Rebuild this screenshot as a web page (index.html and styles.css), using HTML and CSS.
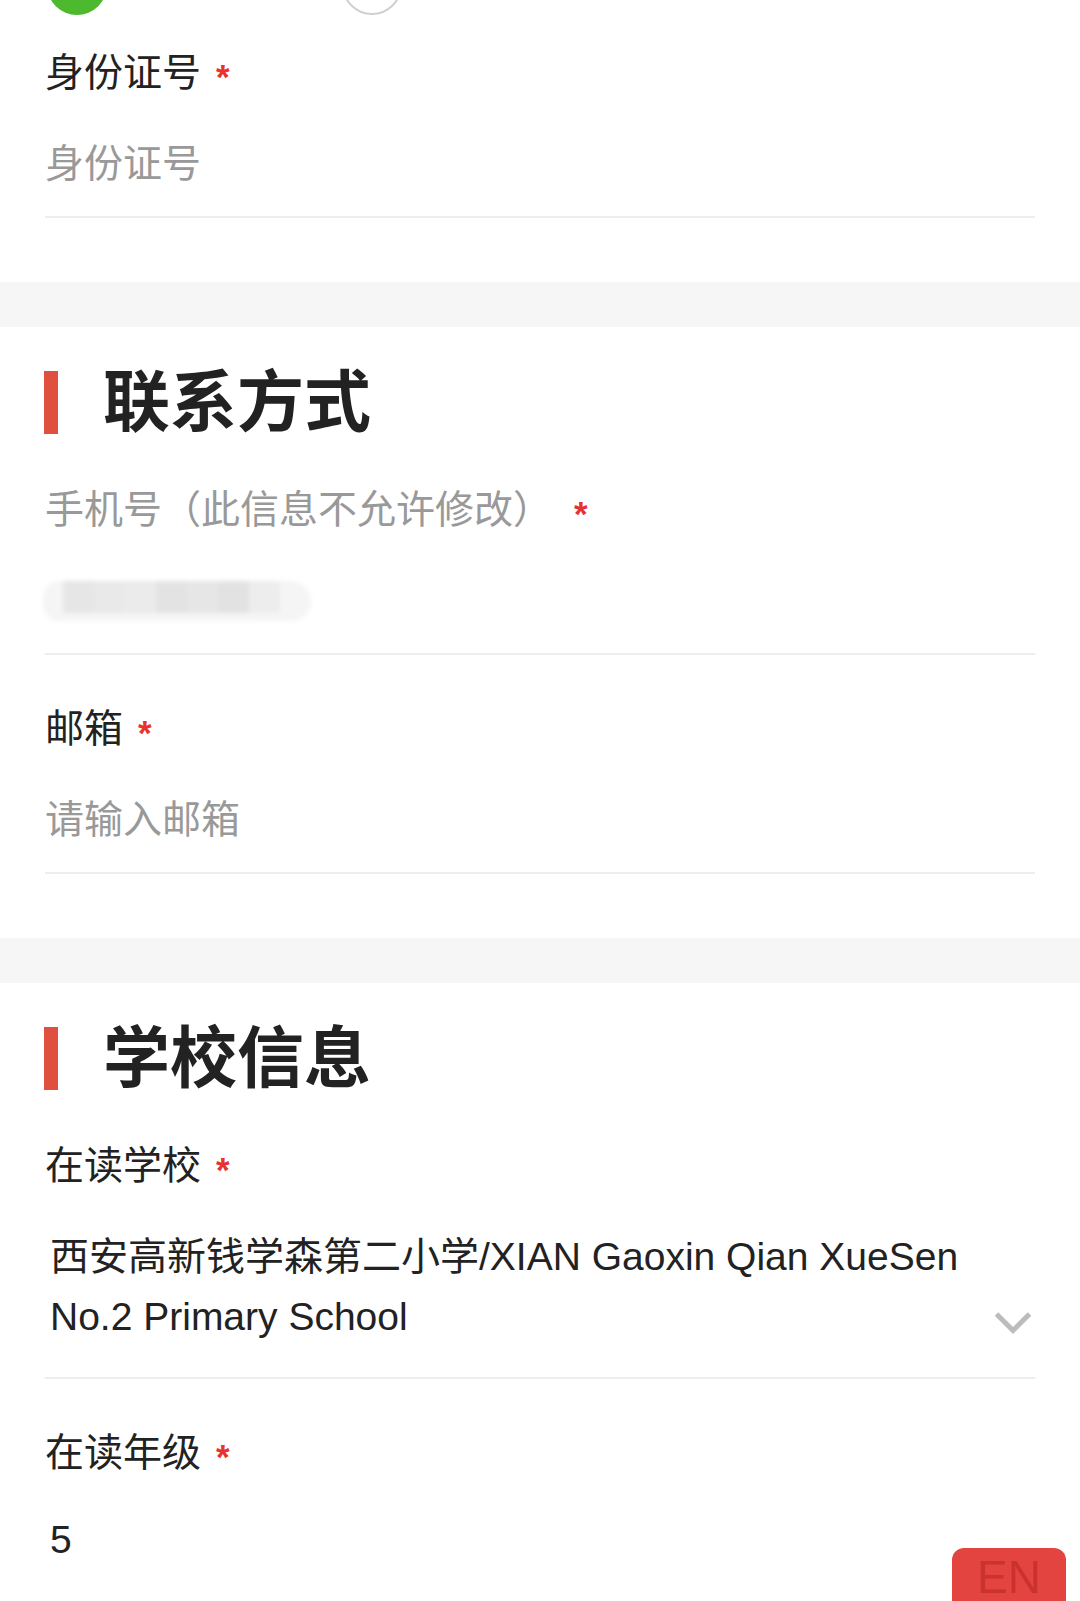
FILE: index.html
```html
<!DOCTYPE html>
<html lang="zh-CN">
<head>
<meta charset="utf-8">
<title>报名信息</title>
<link rel="stylesheet" href="styles.css">
</head>
<body>
<div class="radios">
  <div class="radio"><span class="dot on"></span></div>
  <div class="radio"><span class="dot off"></span></div>
</div>

<section class="section first">
  <div class="field">
    <div class="label">身份证号<span class="req">*</span></div>
    <div class="value placeholder">身份证号</div>
  </div>
</section>

<div class="band"></div>

<section class="section">
  <h2 class="heading"><span class="bar"></span><span class="heading-text">联系方式</span></h2>
  <div class="field">
    <div class="label muted">手机号（此信息不允许修改）<span class="req wide">*</span></div>
    <div class="value masked">
      <div class="blur">
        <span class="cell c1"></span><span class="cell c2"></span><span class="cell c3"></span><span class="cell c4"></span><span class="cell c5"></span><span class="cell c6"></span><span class="cell c7"></span>
      </div>
    </div>
  </div>
  <div class="field">
    <div class="label">邮箱<span class="req">*</span></div>
    <div class="value placeholder">请输入邮箱</div>
  </div>
</section>

<div class="band"></div>

<section class="section last">
  <h2 class="heading"><span class="bar"></span><span class="heading-text">学校信息</span></h2>
  <div class="field select-field">
    <div class="label">在读学校<span class="req">*</span></div>
    <div class="select">
      <div class="select-text">西安高新钱学森第二小学/XIAN Gaoxin Qian XueSen No.2 Primary School</div>
      <svg class="chevron" width="38" height="24" viewBox="0 0 38 24"><polyline points="2.5,3 19,19.5 35.5,3" fill="none" stroke="#bcbcbc" stroke-width="5"/></svg>
    </div>
  </div>
  <div class="field select-field">
    <div class="label">在读年级<span class="req">*</span></div>
    <div class="select">
      <div class="select-text single">5</div>
    </div>
  </div>
</section>

<div class="lang-btn"><span class="lang-text">EN</span></div>
</body>
</html>
```
FILE: styles.css
```css
* { box-sizing: border-box; }
html, body { margin: 0; padding: 0; background: #fff; }
body {
  width: 1080px;
  overflow: hidden;
  font-family: "Liberation Sans", "Noto Sans CJK SC", sans-serif;
  color: #222;
}

.radios {
  display: flex;
  align-items: center;
  height: 60px;
  margin-top: -45px;
  padding-left: 47px;
}
.radio {
  display: flex;
  align-items: center;
  width: 295px;
}
.dot { width: 60px; height: 60px; border-radius: 50%; flex: none; }
.dot.on { background: #4cb92f; }
.dot.off { background: #fff; border: 2px solid #d0d0d0; }

.section {
  padding: 44px 45px 64px;
}
.section.first { padding-top: 32px; }
.section.last { padding-bottom: 0; }

.band { height: 45px; background: #f6f6f6; }

.heading {
  display: flex;
  align-items: center;
  height: 63px;
  margin: 0 0 50px -1px;
}
.bar {
  width: 14px;
  height: 63px;
  background: #e0503f;
  margin-right: 45px;
}
.heading-text {
  font-size: 67px;
  font-weight: 700;
  line-height: 63px;
  color: #222;
}

.field {
  padding-bottom: 26px;
  border-bottom: 2px solid #eeeeee;
}
.field + .field { margin-top: 48px; }

.label {
  height: 52px;
  font-size: 39px;
  line-height: 52px;
  color: #222;
  white-space: nowrap;
}
.label.muted { color: #999; }
.req {
  display: inline-block;
  margin-left: 15px;
  font-family: "Liberation Sans", sans-serif;
  font-weight: 700;
  font-size: 35px;
  line-height: 1;
  color: #e8322e;
  vertical-align: -3px;
}
.req.wide { margin-left: 22px; }

.value {
  margin-top: 39px;
  height: 52px;
  font-size: 39px;
  line-height: 52px;
}
.placeholder { color: #999; }

.masked { display: flex; align-items: center; }
.blur {
  display: flex;
  align-items: flex-start;
  width: 268px;
  height: 40px;
  margin-left: -2px;
  padding: 0 28px 0 20px;
  background: #f5f5f5;
  border-radius: 20px 24px 22px 18px;
  filter: blur(2px);
}
.cell { display: block; width: 31px; height: 32px; }
.c1 { background: #e6e6e6; }
.c2 { background: #e9e9e9; }
.c3 { background: #ebebeb; }
.c4 { background: #e3e3e3; }
.c5 { background: #e6e6e6; }
.c6 { background: #e2e2e2; }
.c7 { background: #ededed; }

.select-field { padding-bottom: 30px; }
.select-field:last-child { padding-bottom: 34px; border-bottom: none; }
.select {
  display: flex;
  align-items: flex-end;
  justify-content: space-between;
  margin-top: 35px;
}
.select-text {
  flex: 1;
  padding-left: 5px;
  padding-right: 30px;
  font-size: 39px;
  line-height: 60px;
  color: #222;
}
.select-text.single { line-height: 52px; }
.chevron { flex: none; margin: 0 3px 12px 0; display: block; }

.lang-btn {
  position: fixed;
  left: 952px;
  top: 1548px;
  width: 114px;
  height: 53px;
  padding-top: 9px;
  border-radius: 12px 12px 0 0;
  background: #e3443f;
  text-align: center;
}
.lang-text {
  display: block;
  color: #c9322f;
  font-family: "Liberation Sans", sans-serif;
  font-size: 46px;
  line-height: 40px;
}
```
